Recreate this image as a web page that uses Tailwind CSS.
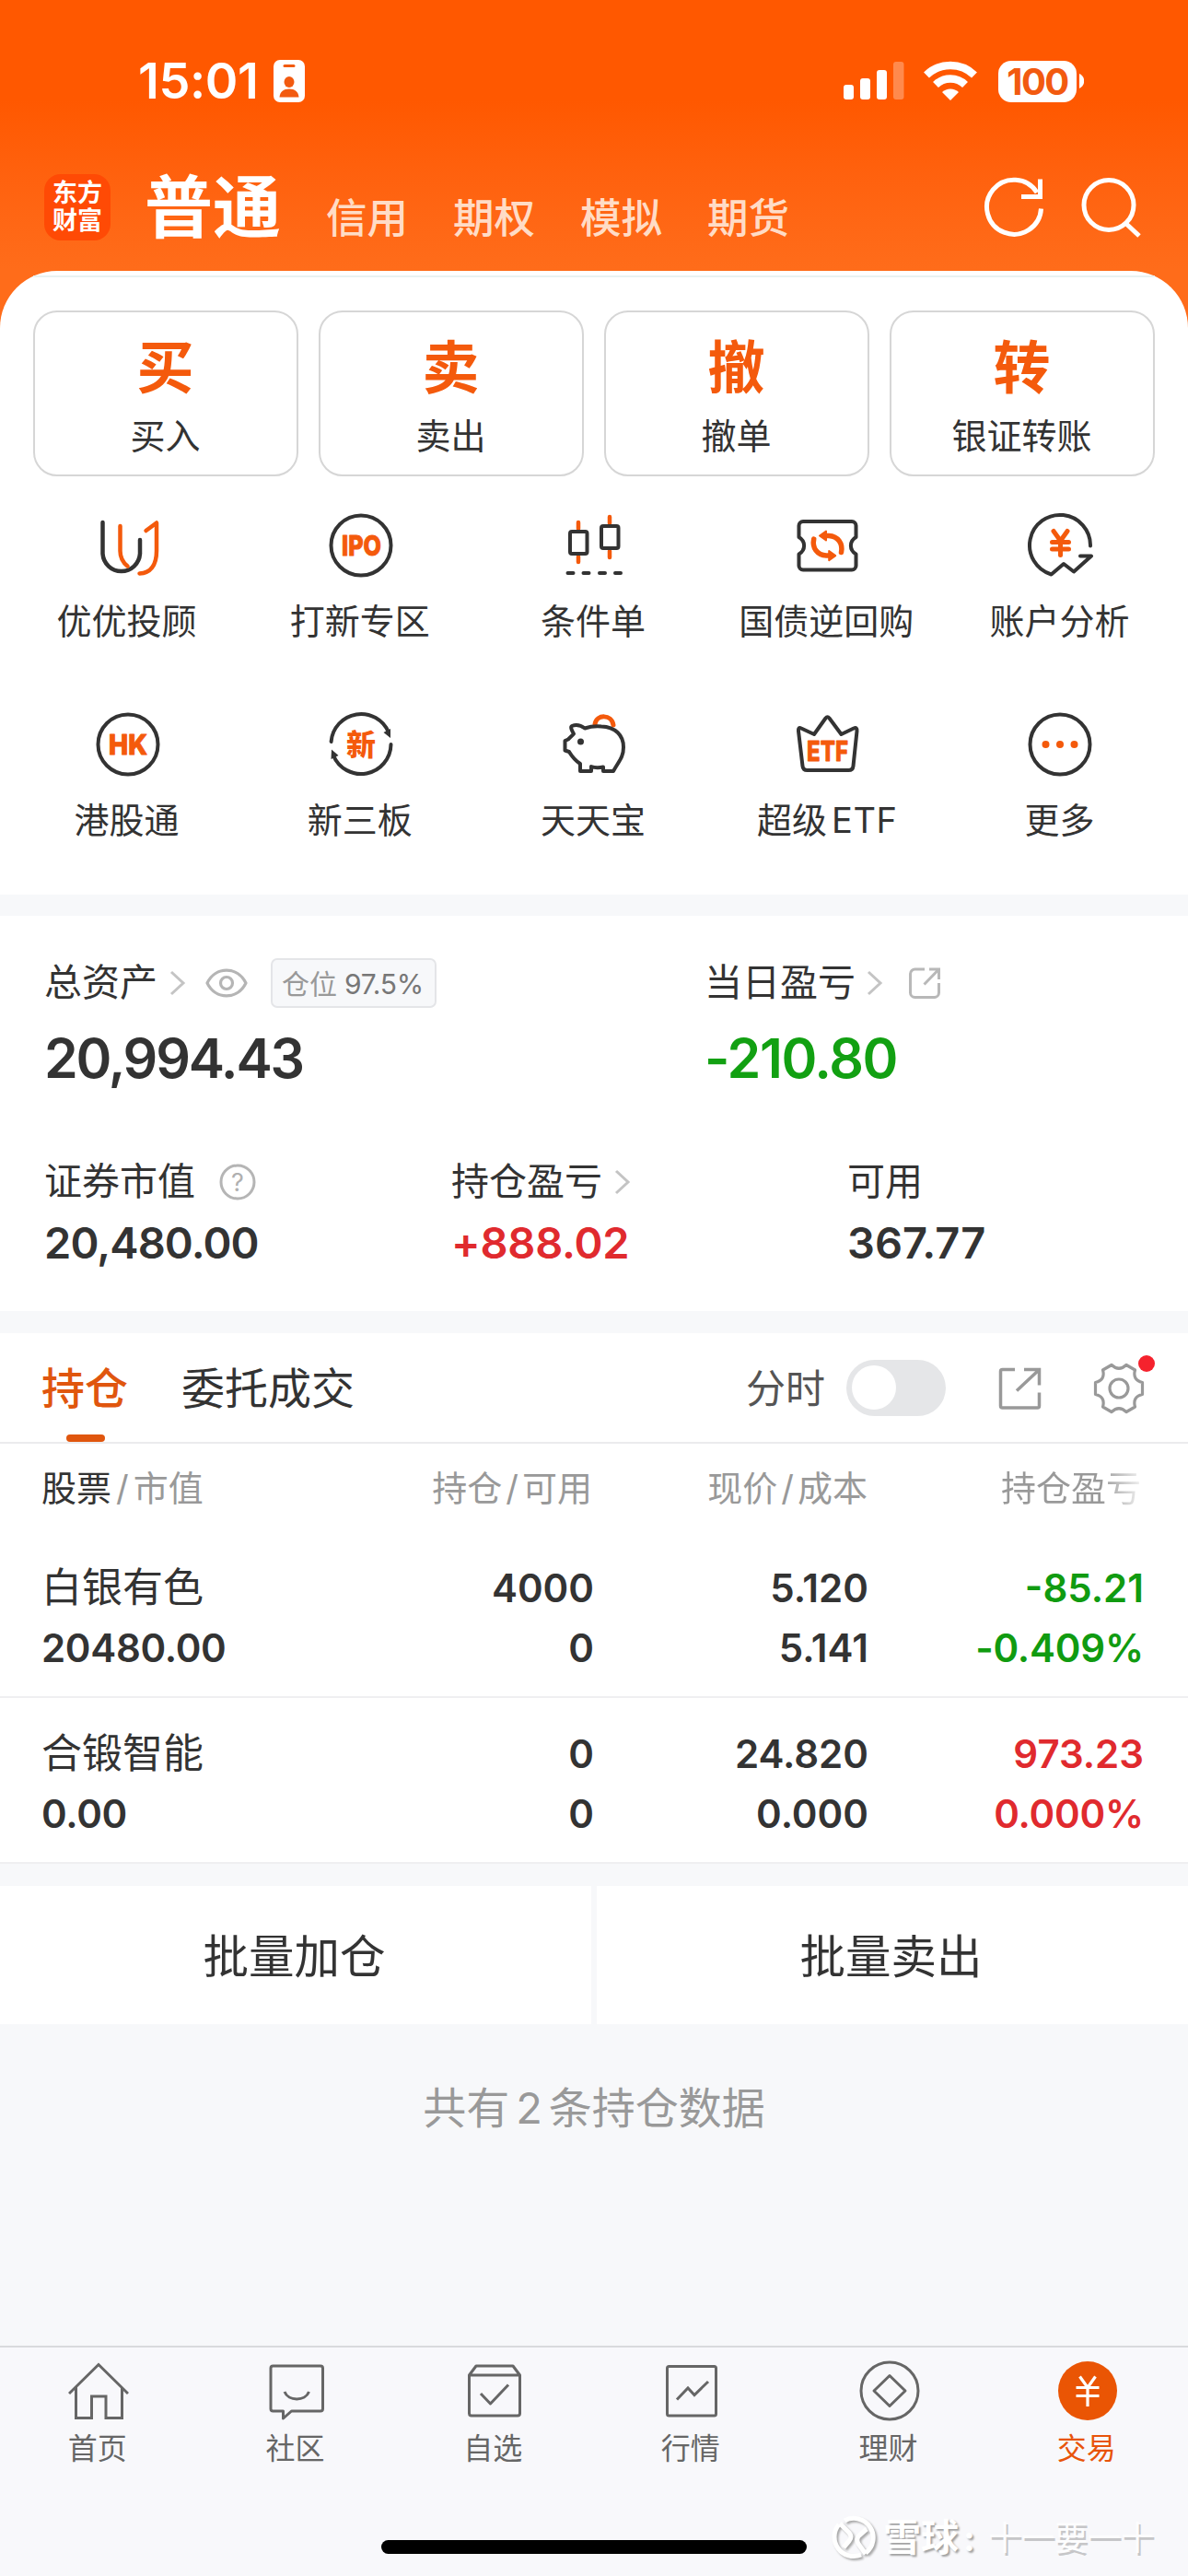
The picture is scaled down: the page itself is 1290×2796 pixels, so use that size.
<!DOCTYPE html>
<html lang="zh-CN">
<head>
<meta charset="utf-8">
<title>普通交易</title>
<script src="https://cdn.jsdelivr.net/npm/@tailwindcss/browser@4"></script>
</head>
<body class="w-[1290px] h-[2796px] overflow-hidden bg-[#f7f8fa] text-[#333] [font-family:Inter,'Noto_Sans_CJK_SC',sans-serif]">
<div class="flex h-[2796px] w-[1290px] flex-col">

  <!-- status bar and account tabs -->
  <header class="h-[364px] shrink-0 bg-linear-to-b from-[#ff5800] from-30% to-[#ff6c1a] to-80%">
    <div class="flex h-[176px] items-end justify-between pr-[113px] pb-[65px] pl-[150px]">
      <div class="flex items-center gap-[12px]">
        <span class="w-[135px] text-[54px] leading-[46px] font-semibold tracking-[-0.400px] whitespace-nowrap text-white">15:01</span>
        <svg class="h-[46px] w-[34px]" viewBox="0 0 34 46"><rect width="34" height="46" rx="7" fill="#fff"/><rect x="10.500" y="5" width="13" height="3" rx="1.500" fill="#f25a10"/><ellipse cx="17" cy="24" rx="5.500" ry="6" fill="#f25a10"/><path d="M6.500 40.500C7 34.500 11 31.500 17 31.500S27 34.500 27.500 40.500Z" fill="#f25a10"/></svg>
      </div>
      <div class="flex items-center">
        <svg class="h-[46px] w-[66px]" viewBox="0 0 66 46" fill="#fff"><rect y="27" width="11" height="16" rx="3"/><rect x="18" y="20" width="11" height="23" rx="3"/><rect x="36" y="11" width="11" height="32" rx="3"/><rect x="54" y="2" width="11.500" height="41" rx="3" fill-opacity=".3"/></svg>
        <svg class="ml-[20px] h-[46px] w-[60px]" viewBox="0 0 60 46" fill="none" stroke="#fff" stroke-width="8.500"><path d="M4 16.500A37.500 37.500 0 0 1 56 16.500"/><path d="M14 27A23 23 0 0 1 46 27"/><path d="M30 44L21 35A13 13 0 0 1 39 35Z" fill="#fff" stroke="none"/></svg>
        <div class="ml-[22px] flex h-[45px] w-[85px] items-center justify-center rounded-[14px] bg-white text-[40px] leading-[45px] font-bold tracking-[-1.500px] text-[#f25a10]">100</div>
        <svg class="ml-[3px] h-[16px] w-[5px]" viewBox="0 0 5 16"><path d="M0 0C7 3 7 13 0 16Z" fill="#fff"/></svg>
      </div>
    </div>
    <div class="flex h-[98px] items-center pr-[50px] pl-[48px]">
      <div class="flex h-[72px] w-[72px] flex-col items-center justify-center rounded-[18px] bg-[#ff4a05] text-[27px] leading-[30px] font-bold text-white"><span>东方</span><span>财富</span></div>
      <span class="ml-[37px] text-[74px] leading-[80px] font-bold text-white">普通</span>
      <nav class="mt-[23px] ml-[49px] flex gap-[49px] text-[44.500px] leading-[50px] font-medium text-[#ffdcc6]"><span>信用</span><span>期权</span><span>模拟</span><span>期货</span></nav>
      <svg class="ml-auto h-[66px] w-[66px]" viewBox="0 1.500 66 66" fill="none" stroke="#fff" stroke-width="5"><path d="M62.500 36A29.500 29.500 0 1 1 58 18.500"/><path d="M61.500 4V23H41"/></svg>
      <svg class="ml-[38px] h-[66px] w-[68px]" viewBox="0 1.500 68 66" fill="none" stroke="#fff" stroke-width="5"><ellipse cx="32" cy="32" rx="27" ry="27"/><path d="M50 51.500L65 65.500"/></svg>
    </div>
  </header>

  <!-- shortcuts -->
  <section class="-mt-[70px] h-[677px] shrink-0 rounded-t-[62px] bg-white pt-[5px]">
    <div class="mx-[36px] h-[2px] bg-[#e9f2f2]"></div>
    <div class="mr-[36px] ml-[36px] mt-[36px] grid grid-cols-4 gap-[22px]">
      <div class="flex h-[180px] flex-col items-center rounded-[26px] border-2 border-[#d6d6d6] pt-[28px] pr-[1px]"><span class="text-[62px] leading-[66px] font-bold text-[#f45a0c]">买</span><span class="mt-[15px] text-[38px] leading-[50px]">买入</span></div>
      <div class="flex h-[180px] flex-col items-center rounded-[26px] border-2 border-[#d6d6d6] pt-[28px] pr-[1px]"><span class="text-[62px] leading-[66px] font-bold text-[#f45a0c]">卖</span><span class="mt-[15px] text-[38px] leading-[50px]">卖出</span></div>
      <div class="flex h-[180px] flex-col items-center rounded-[26px] border-2 border-[#d6d6d6] pt-[28px] pr-[1px]"><span class="text-[62px] leading-[66px] font-bold text-[#f45a0c]">撤</span><span class="mt-[15px] text-[38px] leading-[50px]">撤单</span></div>
      <div class="flex h-[180px] flex-col items-center rounded-[26px] border-2 border-[#d6d6d6] pt-[28px] pr-[1px]"><span class="text-[62px] leading-[66px] font-bold text-[#f45a0c]">转</span><span class="mt-[15px] text-[38px] leading-[50px]">银证转账</span></div>
    </div>

    <div class="mx-[12px] mt-[39px] grid grid-cols-5 gap-y-[75px] text-[38px] leading-[46px]">
      <div class="flex flex-col items-center gap-[23px]">
        <svg class="h-[72px] w-[72px]" viewBox="0 0 72 72" fill="none" stroke-width="4.500" stroke-linecap="round" stroke-linejoin="round"><path stroke="#333" d="M8.500 11V45A20.300 20.500 0 0 0 49 45V30"/><path stroke="#f45a0c" d="M27.500 15V42C27.500 50 31 55 35.500 58.500"/><path stroke="#f45a0c" d="M55.500 20L67 11.500V42C67 58 60 66 48.500 66.500"/></svg>
        <span class="pr-[2px]">优优投顾</span>
      </div>
      <div class="flex flex-col items-center gap-[23px]">
        <svg class="h-[72px] w-[72px]" viewBox="0 0 72 72"><circle cx="36" cy="36" r="32.500" fill="none" stroke="#333" stroke-width="4"/><text x="15" y="47" font-size="30" font-weight="800" textLength="43" lengthAdjust="spacingAndGlyphs" fill="#f45a0c" stroke="#f45a0c" stroke-width="1" stroke-linejoin="round">IPO</text></svg>
        <span class="pr-[2px]">打新专区</span>
      </div>
      <div class="flex flex-col items-center gap-[23px]">
        <svg class="h-[72px] w-[72px]" viewBox="0 0 72 72" fill="none" stroke-width="4.500" stroke-linecap="round"><path stroke="#f45a0c" d="M19 11V18M19 48V54M53 5V12M53 42V49"/><rect x="10" y="21" width="18.500" height="24" rx="2" stroke="#333" stroke-width="4"/><rect x="44" y="15" width="18.500" height="24" rx="2" stroke="#333" stroke-width="4"/><path stroke="#333" stroke-width="4" d="M7.500 66H13.500M24.500 66H30.500M42 66H48M59 66H65"/></svg>
        <span class="pr-[2px]">条件单</span>
      </div>
      <div class="flex flex-col items-center gap-[23px]">
        <svg class="h-[72px] w-[72px]" viewBox="0 0 72 72" fill="none" stroke-width="4" stroke-linejoin="round"><path stroke="#333" d="M10 10H63A4.500 4.500 0 0 1 67.500 14.500V27C60 31.500 60 41 67.500 45.500V58A4.500 4.500 0 0 1 63 62.500H10A4.500 4.500 0 0 1 5.500 58V45.500C13 41 13 31.500 5.500 27V14.500A4.500 4.500 0 0 1 10 10Z"/><g id="swap"><path stroke="#f45a0c" stroke-width="5.500" stroke-linecap="round" d="M51.500 43.500C53.500 34 48 26 38 25.500H34"/><path fill="#f45a0c" stroke="#f45a0c" stroke-width="2" d="M28 25.500L35 20.500V30.500Z"/></g><use href="#swap" transform="rotate(180 36.600 36.300)"/></svg>
        <span class="pr-[2px]">国债逆回购</span>
      </div>
      <div class="flex flex-col items-center gap-[23px]">
        <svg class="h-[72px] w-[72px]" viewBox="0 0 72 72" fill="none" stroke-width="4" stroke-linecap="round" stroke-linejoin="round"><path stroke="#333" d="M69 36.500A33 33 0 1 0 26.500 67.500L40 56L51 64.500L70 47.500H58"/><path stroke="#f45a0c" stroke-width="5" d="M29 20.500L36.500 31L44 20.500M36.500 31V46.500M27.500 32.500H45.500M27.500 40H45.500"/></svg>
        <span class="pr-[2px]">账户分析</span>
      </div>
      <div class="flex flex-col items-center gap-[23px]">
        <svg class="h-[72px] w-[72px]" viewBox="0 0 72 72"><circle cx="36" cy="36" r="32.500" fill="none" stroke="#333" stroke-width="4"/><text x="15" y="47" font-size="30" font-weight="800" textLength="42" lengthAdjust="spacingAndGlyphs" fill="#f45a0c" stroke="#f45a0c" stroke-width="1" stroke-linejoin="round">HK</text></svg>
        <span class="pr-[2px]">港股通</span>
      </div>
      <div class="flex flex-col items-center gap-[23px]">
        <svg class="h-[72px] w-[72px]" viewBox="0 0 72 72"><path fill="none" stroke="#333" stroke-width="4" stroke-linecap="round" d="M3.600 33A32.500 32.500 0 0 1 66 23M68.500 36A32.500 32.500 0 0 1 6 48"/><path fill="#333" d="M68 29L60.500 23L68 19ZM4 41.500L11.500 48L3.500 52Z"/><text x="20" y="47.500" font-size="32" font-weight="900" fill="#f45a0c">新</text></svg>
        <span class="pr-[2px]">新三板</span>
      </div>
      <div class="flex flex-col items-center gap-[23px]">
        <svg class="h-[72px] w-[72px]" viewBox="0 0 72 72" fill="none" stroke-width="4" stroke-linejoin="round" stroke-linecap="round"><path stroke="#f45a0c" stroke-width="5" d="M37 14C39 3 55 3 57 15"/><path stroke="#333" d="M14 24.500C12 21 10 17 12 16C17 14 22 15.500 26 18.500C32 16.500 38 16 44 16.500C59 17 68 26 68 39C68 50 63 54 57 65H46V60.500C41 61.500 37 61.500 33 60V65H21V57C15 53 12 49 9 44L4.500 42.500V32L8 30.500C9.500 28.500 12 27 14 24.500Z"/><circle cx="21.500" cy="33" r="3.500" fill="#333" stroke="none"/></svg>
        <span class="pr-[2px]">天天宝</span>
      </div>
      <div class="flex flex-col items-center gap-[23px]">
        <svg class="h-[72px] w-[72px]" viewBox="0 0 72 72"><path fill="none" stroke="#333" stroke-width="4" stroke-linejoin="round" d="M8 18.500L22 25L34.500 7.500Q36.500 5 38.500 7.500L51.500 25L65 18.500Q69 17 68.500 21.500L64.500 59.500Q64 64 59.500 64H14.500Q10 64 9.500 59.500L5 21.500Q4.500 17 8 18.500Z"/><text x="14" y="53.500" font-size="30" font-weight="800" textLength="45" lengthAdjust="spacingAndGlyphs" fill="#f45a0c" stroke="#f45a0c" stroke-width=".8" stroke-linejoin="round">ETF</text></svg>
        <span>超级<span class="ml-[5px] tracking-[.5px]">ETF</span></span>
      </div>
      <div class="flex flex-col items-center gap-[23px]">
        <svg class="h-[72px] w-[72px]" viewBox="0 0 72 72"><circle cx="36" cy="36" r="32.500" fill="none" stroke="#333" stroke-width="4"/><g fill="#f45a0c"><circle cx="20.500" cy="36" r="4"/><circle cx="36" cy="36" r="4"/><circle cx="51.500" cy="36" r="4"/></g></svg>
        <span class="pr-[2px]">更多</span>
      </div>
    </div>
  </section>

  <!-- asset summary -->
  <section class="mt-[23px] h-[429px] shrink-0 bg-white pt-[45px] pl-[48px] text-[41px]">
    <div class="grid grid-cols-[717px_1fr]">
      <div>
        <div class="flex h-[56px] items-center">
          <span>总资产</span>
          <svg class="ml-[13px] h-[28px] w-[18px]" viewBox="0 0 18 28" fill="none" stroke="#c4c4c4" stroke-width="3"><path d="M2 2L15 14L2 26"/></svg>
          <svg class="ml-[20px] h-[34px] w-[48px]" viewBox="0 0 48 34" fill="none" stroke="#b5b5b5" stroke-width="3.200"><path d="M3 17C12 -1.500 36 -1.500 45 17C36 35.500 12 35.500 3 17Z" stroke-linejoin="round"/><circle cx="24" cy="17" r="6.500"/></svg>
          <div class="ml-[24px] flex h-[54px] w-[180px] items-center justify-center gap-[8px] rounded-[7px] border-2 border-[#e4e5e8] bg-[#f7f8fa] pt-[1px] pr-[2px] text-[30px] leading-[50px] text-[#999]"><span>仓位</span><span class="tracking-[-0.200px] text-[#777]">97.5%</span></div>
        </div>
        <div class="mt-[24px] text-[59px] leading-[60px] font-semibold tracking-[-2.200px]">20,994.43</div>
      </div>
      <div>
        <div class="flex h-[56px] items-center">
          <span>当日盈亏</span>
          <svg class="ml-[12px] h-[28px] w-[18px]" viewBox="0 0 18 28" fill="none" stroke="#c4c4c4" stroke-width="3"><path d="M2 2L15 14L2 26"/></svg>
          <svg class="ml-[26px] h-[38px] w-[38px]" viewBox="0 -1 38 38" fill="none" stroke="#b8b8b8" stroke-width="3"><path d="M19 3H9A5 5 0 0 0 3.500 8V28.500A5 5 0 0 0 8.500 33.500H29.500A5 5 0 0 0 34.500 28.500V18M24 3H34.500V14M34 3.500L18.500 19.500"/></svg>
        </div>
        <div class="mt-[24px] text-[59px] leading-[60px] font-semibold tracking-[-1.400px] text-[#12a012]">-210.80</div>
      </div>
    </div>
    <div class="mt-[79px] grid grid-cols-[442px_430px_1fr]">
      <div>
        <div class="flex h-[50px] items-center"><span>证券市值</span>
          <svg class="ml-[26px] h-[40px] w-[40px]" viewBox="0 0 40 40"><circle cx="20" cy="20" r="18" fill="none" stroke="#b5b5b5" stroke-width="3"/><text x="20" y="29.500" text-anchor="middle" font-size="27" fill="#b0b0b0">?</text></svg>
        </div>
        <div class="mt-[16px] text-[47px] leading-[50px] font-semibold tracking-[-0.900px]">20,480.00</div>
      </div>
      <div>
        <div class="flex h-[50px] items-center"><span>持仓盈亏</span>
          <svg class="ml-[13px] h-[28px] w-[18px]" viewBox="0 0 18 28" fill="none" stroke="#c4c4c4" stroke-width="3"><path d="M2 2L15 14L2 26"/></svg>
        </div>
        <div class="mt-[16px] text-[47px] leading-[50px] font-semibold tracking-[-0.200px] text-[#e02a2e]">+888.02</div>
      </div>
      <div>
        <div class="flex h-[50px] items-center">可用</div>
        <div class="mt-[16px] text-[47px] leading-[50px] font-semibold">367.77</div>
      </div>
    </div>
  </section>

  <!-- holdings -->
  <section class="mt-[24px] shrink-0 bg-white">
    <div class="flex h-[120px] items-center border-b-2 border-[#ebebed] pr-[46px] pl-[45px] text-[47px]">
      <div class="relative flex h-full items-center pt-[3px] font-medium text-[#e0560e]">持仓<i class="absolute bottom-0 left-[27px] h-[8px] w-[42px] rounded-[4px] bg-[#e0560e]"></i></div>
      <div class="ml-[58px] pt-[3px]">委托成交</div>
      <div class="ml-auto pt-[3px] text-[43px] text-[#555]">分时</div>
      <div class="ml-[23px] flex h-[61px] w-[108px] items-center rounded-full bg-[#e5e6e8] px-[6px]"><i class="h-[48px] w-[48px] rounded-full bg-white"></i></div>
      <svg class="ml-[56px] h-[50px] w-[50px]" viewBox="0 -1 50 50" fill="none" stroke="#999" stroke-width="3.500"><path d="M19 4.500H5.500Q3.500 4.500 3.500 6.500V44Q3.500 46 5.500 46H43.500Q45.500 46 45.500 44V29.500M29 4.500H45.500V21.500M45 5L21 27.500"/></svg>
      <div class="relative ml-[53px] h-[58px] w-[58px]">
        <svg class="h-[58px] w-[58px]" viewBox="0 -1 58 58" fill="none" stroke="#999" stroke-width="3.200" stroke-linejoin="round"><path d="M21 3.500Q29 11 37 3.500L46.500 9Q43.500 20 54.500 22.500V35.500Q43.500 38 46.500 49L37 54.500Q29 47 21 54.500L11.500 49Q14.500 38 3.500 35.500V22.500Q14.500 20 11.500 9Z"/><circle cx="29" cy="29" r="10"/></svg>
        <i class="absolute -top-[6px] left-[50px] h-[18px] w-[18px] rounded-full bg-[#f5222d]"></i>
      </div>
    </div>

    <div class="grid h-[96px] grid-cols-[299px_299px_299px_299px] items-center pt-[1px] pl-[45px] text-right text-[38px] text-[#999]">
      <div class="text-left"><span class="text-[#333]">股票</span><span class="mx-[5px]">/</span>市值</div>
      <div>持仓<span class="mx-[4px]">/</span>可用</div>
      <div>现价<span class="mx-[4px]">/</span>成本</div>
      <div class="bg-linear-to-r from-[#999] from-85% to-[#999]/10 bg-clip-text pr-[2px] text-transparent">持仓盈亏</div>
    </div>

    <div class="grid h-[180px] grid-cols-[300px_300px_298px_299px] border-b-2 border-[#efeff1] pt-[28px] pl-[45px] text-right text-[42px] leading-[65px] font-[560]">
      <div class="text-left"><div class="text-[44px] font-normal">白银有色</div><div class="tracking-[-0.300px]">20480.00</div></div>
      <div><div>4000</div><div>0</div></div>
      <div><div>5.120</div><div>5.141</div></div>
      <div class="text-[#109b10]"><div>-85.21</div><div class="tracking-[-0.200px]">-0.409%</div></div>
    </div>
    <div class="grid h-[180px] grid-cols-[300px_300px_298px_299px] border-b-2 border-[#efeff1] pt-[28px] pl-[45px] text-right text-[42px] leading-[65px] font-[560]">
      <div class="text-left"><div class="text-[44px] font-normal">合锻智能</div><div class="tracking-[-0.300px]">0.00</div></div>
      <div><div>0</div><div>0</div></div>
      <div><div>24.820</div><div>0.000</div></div>
      <div class="text-[#e02a2e]"><div>973.23</div><div class="tracking-[-0.200px]">0.000%</div></div>
    </div>
  </section>

  <!-- batch actions -->
  <div class="mt-[24px] grid h-[150px] shrink-0 grid-cols-2 gap-[6px] text-[49.500px]">
    <div class="flex items-center justify-center bg-white pt-[4px] pr-[3px]">批量加仓</div>
    <div class="flex items-center justify-center bg-white pt-[4px] pr-[3px]">批量卖出</div>
  </div>
  <div class="flex h-[182px] shrink-0 items-center justify-center text-[47px] text-[#999]">共有<span class="mx-[7px]">2</span>条持仓数据</div>

  <!-- bottom navigation -->
  <footer class="relative mt-auto h-[250px] shrink-0 border-t-2 border-[#d9dadd] bg-[#f8f8fb] pt-[14px]">
    <nav class="mr-[2px] grid grid-cols-6 text-[32px] leading-[40px] text-[#666]">
      <div class="flex flex-col items-center gap-[10px]">
        <svg class="h-[66px] w-[66px]" viewBox="0 0 66 66" fill="none" stroke="#666" stroke-width="3"><path d="M1 36L33 4.500L65 36M8.500 29V62.500H25.500V39H41V62.500H58.500V29"/></svg>
        <span class="pr-[3px]">首页</span></div>
      <div class="flex flex-col items-center gap-[10px]">
        <svg class="h-[66px] w-[66px]" viewBox="0 0 66 66" fill="none" stroke="#666" stroke-width="3" stroke-linejoin="round"><path d="M7.500 6H59Q61.500 6 61.500 8.500V52.500Q61.500 55 59 55H27.500L18.500 63V55H7.500Q5 55 5 52.500V8.500Q5 6 7.500 6Z"/><path d="M20 34C24 44.500 42.500 44.500 46.500 34"/></svg>
        <span class="pr-[3px]">社区</span></div>
      <div class="flex flex-col items-center gap-[10px]">
        <svg class="h-[66px] w-[66px]" viewBox="0 0 66 66" fill="none" stroke="#666" stroke-width="3" stroke-linejoin="round"><path d="M5.500 16L13 6H53L60.500 16V57.500Q60.500 60 58 60H8Q5.500 60 5.500 57.500ZM5.500 16H60.500M18 36L28.500 47L48 26.500"/></svg>
        <span class="pr-[3px]">自选</span></div>
      <div class="flex flex-col items-center gap-[10px]">
        <svg class="h-[66px] w-[66px]" viewBox="0 0 66 66" fill="none" stroke="#666" stroke-width="3"><rect x="6.500" y="6.500" width="53" height="53.500" rx="2"/><path d="M17 42.500L29 30L36 37.500L51 23"/></svg>
        <span class="pr-[3px]">行情</span></div>
      <div class="flex flex-col items-center gap-[10px]">
        <svg class="h-[66px] w-[66px]" viewBox="0 0 66 66" fill="none" stroke="#666" stroke-width="3" stroke-linejoin="round"><circle cx="33" cy="33" r="31"/><path d="M33 16.500L50 33L33 49.500L16 33Z"/></svg>
        <span class="pr-[3px]">理财</span></div>
      <div class="flex flex-col items-center gap-[10px] text-[#e8540a]">
        <svg class="h-[66px] w-[66px]" viewBox="0 0 66 66" fill="none" stroke="#fff" stroke-width="3.200"><circle cx="33" cy="33" r="32" fill="#ea5504" stroke="none"/><path d="M24.500 17.500L33 29.500L41.500 17.500M33 29V50M20.500 29.500H45.500M20.500 38.500H45.500"/></svg>
        <span class="pr-[2px]">交易</span></div>
    </nav>
    <i class="absolute top-[209px] left-[414px] h-[15px] w-[462px] rounded-full bg-black"></i>
    <div class="absolute top-[180px] left-[902px] flex h-[54px] items-center whitespace-nowrap text-white [text-shadow:2px_2px_2px_#a0a0a0]">
      <svg class="h-[50px] w-[50px] drop-shadow-[2px_2px_1px_#a8a8a8]" viewBox="0 0 50 50" fill="none" stroke="#fff" stroke-width="5"><path d="M15 6A21 21 0 0 1 38 41M33 43A21 21 0 0 1 9 10"/><path d="M10 9L20 19Q24 23.500 20 28L14 35M39 15L31 22Q27 26 30 31L38 42"/></svg>
      <span class="ml-[7px] text-[41px] font-bold">雪球</span><span class="w-[32px] pl-[5px] text-[38px] font-bold">:</span><span class="text-[36px] font-normal text-[#fdfdfe] [text-shadow:2px_3px_0_#c6c6c8]">十一要一十</span>
    </div>
  </footer>
</div>
</body>
</html>
